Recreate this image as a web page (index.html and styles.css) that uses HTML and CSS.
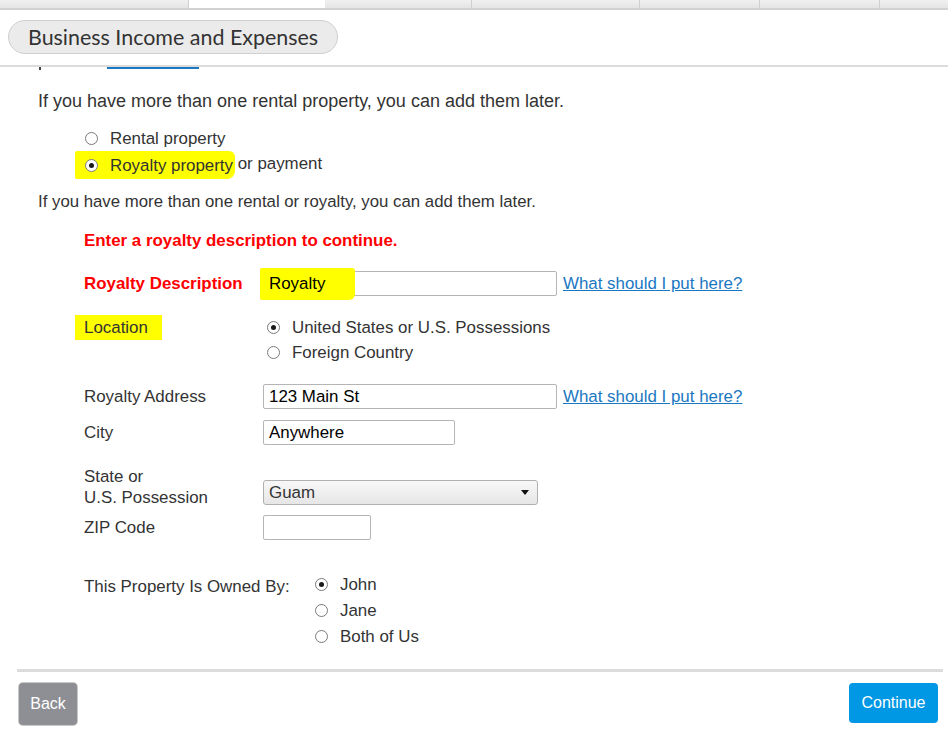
FILE: index.html
```html
<!DOCTYPE html>
<html>
<head>
<meta charset="utf-8">
<link rel="stylesheet" href="styles.css">
</head>
<body>
<div class="tabs">
  <div class="tab t1"></div>
  <div class="tab t2 active"></div>
  <div class="tab t3"></div>
  <div class="tab t4"></div>
  <div class="tab t5"></div>
  <div class="tab t6"></div>
  <div class="tab t7"></div>
</div>
<div class="header">
  <div class="pill">Business Income and Expenses</div>
</div>
<div class="content">
  <div class="clip"><span class="stem"></span><span class="uline"></span></div>
  <p class="p1">If you have more than one rental property, you can add them later.</p>
  <div class="choices">
    <label class="radio-row"><span class="radio"></span><span>Rental property</span></label>
    <label class="radio-row hl-row"><span class="hl"><span class="radio checked"></span><span>Royalty property</span></span><span>&nbsp;or payment</span></label>
  </div>
  <p class="p2">If you have more than one rental or royalty, you can add them later.</p>
  <div class="form">
    <div class="error">Enter a royalty description to continue.</div>
    <div class="row row-desc">
      <div class="lbl err-lbl">Royalty Description</div>
      <div class="field"><div class="input wide"><span class="hl-text">Royalty</span></div><a href="#" class="link">What should I put here?</a></div>
    </div>
    <div class="row row-loc">
      <div class="lbl"><span class="hl-loc">Location</span></div>
      <div class="field-col">
        <div class="radio-row"><span class="radio checked"></span><span>United States or U.S. Possessions</span></div>
        <div class="radio-row"><span class="radio"></span><span>Foreign Country</span></div>
      </div>
    </div>
    <div class="row row-addr">
      <div class="lbl">Royalty Address</div>
      <div class="field"><div class="input wide">123 Main St</div><a href="#" class="link">What should I put here?</a></div>
    </div>
    <div class="row row-city">
      <div class="lbl">City</div>
      <div class="field"><div class="input city">Anywhere</div></div>
    </div>
    <div class="row row-state">
      <div class="lbl">State or<br>U.S. Possession</div>
      <div class="field"><div class="select"><span>Guam</span><span class="caret"></span></div></div>
    </div>
    <div class="row row-zip">
      <div class="lbl">ZIP Code</div>
      <div class="field"><div class="input zip"></div></div>
    </div>
    <div class="row row-owner">
      <div class="lbl owner-lbl">This Property Is Owned By:</div>
      <div class="field-col">
        <div class="radio-row"><span class="radio checked"></span><span>John</span></div>
        <div class="radio-row"><span class="radio"></span><span>Jane</span></div>
        <div class="radio-row"><span class="radio"></span><span>Both of Us</span></div>
      </div>
    </div>
  </div>
</div>
<div class="footer">
  <button class="btn back">Back</button>
  <button class="btn continue">Continue</button>
</div>
</body>
</html>
```
FILE: styles.css
```css
html, body {
  margin: 0;
  padding: 0;
  background: #fff;
}
body {
  font-family: "Liberation Sans", Arial, sans-serif;
  font-size: 16.9px;
  color: #333;
  width: 948px;
  height: 733px;
  overflow: hidden;
}
.tabs {
  display: flex;
  height: 8px;
  border-bottom: 2px solid #d2d2d2;
}
.tab {
  background: linear-gradient(#f0f0f0, #e4e4e4);
  border-right: 1px solid #cfcfcf;
  box-sizing: border-box;
}
.tab.active { background: #fff; }
.t1 { width: 189px; }
.t2 { width: 136px; border-right: none; }
.t3 { width: 147px; }
.t4 { width: 168px; }
.t5 { width: 120px; }
.t6 { width: 120px; }
.t7 { flex: 1; border-right: none; }
.header {
  padding: 10px 8px 11px;
  border-bottom: 2px solid #dcdcdc;
}
.pill {
  display: inline-block;
  height: 32px;
  line-height: 32px;
  padding: 0 19px;
  border: 1px solid #cfcfcf;
  border-radius: 18px;
  background: #ebebeb;
  font-family: Lato, "Open Sans", sans-serif;
  font-size: 21.45px;
  color: #333;
}
.content {
  padding-left: 38px;
}
.clip {
  height: 4px;
  display: flex;
  align-items: flex-start;
}
.stem {
  width: 2px;
  height: 3px;
  background: #444;
  margin-left: 1px;
}
.uline {
  width: 92px;
  height: 2px;
  background: #1a78c2;
  margin-left: 66px;
}
.link {
  color: #1a78c2;
  text-decoration: underline;
}
p { margin: 0; }
.p1 {
  margin-top: 19px;
  font-size: 18px;
  line-height: 22px;
}
.choices {
  margin-top: 14px;
  padding-left: 47px;
}
.radio-row {
  display: flex;
  align-items: center;
  height: 25px;
  line-height: 25px;
}
.radio {
  width: 13px;
  height: 13px;
  border: 1px solid #7a7a7a;
  border-radius: 50%;
  box-sizing: border-box;
  background: #fff;
  margin-right: 12px;
  position: relative;
  flex: none;
}
.radio.checked::after {
  content: "";
  position: absolute;
  left: 3px;
  top: 3px;
  width: 5px;
  height: 5px;
  border-radius: 50%;
  background: #1a1a1a;
}
.hl {
  display: inline-flex;
  align-items: center;
  background: #ffff00;
  margin-left: -10px;
  padding-left: 10px;
  padding-right: 2px;
  margin-right: -2px;
  height: 28px;
  margin-top: 3px;
  border-radius: 2px 6px 8px 2px;
}
.p2 {
  margin-top: 16px;
  font-size: 16.8px;
  line-height: 20px;
}
.form {
  padding-left: 46px;
}
.error {
  margin-top: 19px;
  color: #f00;
  font-weight: bold;
  line-height: 20px;
}
.row {
  display: flex;
  align-items: flex-start;
}
.lbl {
  width: 179px;
  flex: none;
  line-height: 25px;
}
.err-lbl {
  color: #f00;
  font-weight: bold;
}
.field {
  display: flex;
  align-items: center;
  gap: 6px;
}
.field-col {
  display: flex;
  flex-direction: column;
  padding-left: 4px;
}
.input {
  height: 25px;
  box-sizing: border-box;
  border: 1px solid #b5b5b5;
  border-radius: 2px;
  padding: 0 5px;
  line-height: 23px;
  color: #000;
}
.input.wide { width: 294px; }
.input.city { width: 192px; }
.input.zip { width: 108px; }
.hl-text {
  display: inline-block;
  background: #ffff00;
  margin-left: -9px;
  padding: 0 30px 0 9px;
  line-height: 32px;
  margin-top: -4px;
  height: 32px;
  vertical-align: top;
  border-radius: 2px 3px 6px 2px;
}
.row-desc { margin-top: 20px; }
.row-loc { margin-top: 19px; }
.hl-loc {
  display: inline-block;
  background: #ffff00;
  margin-left: -9px;
  padding: 0 14px 0 9px;
  line-height: 25px;
}
.row-addr { margin-top: 19px; }
.row-city { margin-top: 11px; }
.row-state { margin-top: 21px; }
.row-state .lbl { line-height: 21px; }
.row-state .field { margin-top: 14px; }
.select {
  width: 275px;
  height: 25px;
  box-sizing: border-box;
  border: 1px solid #b0b0b0;
  border-radius: 3px;
  background: linear-gradient(#f8f8f8, #e6e6e6);
  display: flex;
  align-items: center;
  justify-content: space-between;
  padding: 0 8px 0 5px;
  color: #333;
}
.caret {
  width: 0;
  height: 0;
  border-left: 4px solid transparent;
  border-right: 4px solid transparent;
  border-top: 5px solid #111;
}
.row-zip { margin-top: 7px; }
.row-owner { margin-top: 31px; }
.owner-lbl { width: 228px; line-height: 27px; margin-top: 2px; }
.row-owner .field-col { padding-left: 3px; }
.row-owner .radio-row { height: 26px; }
.footer {
  margin: 20px 5px 0 17px;
  border-top: 3px solid #dcdcdc;
  padding-top: 11px;
  display: flex;
  justify-content: space-between;
  align-items: flex-start;
}
.btn {
  font-family: "Liberation Sans", Arial, sans-serif;
  font-size: 16px;
  color: #fff;
  border: none;
  border-radius: 4px;
  height: 40px;
  cursor: pointer;
}
.back {
  margin-left: 2px;
  width: 58px;
  height: 42px;
  background: #8e8f94;
  box-shadow: 0 0 0 1px #c9c9c9;
}
.continue {
  width: 89px;
  margin-right: 5px;
  background: #0097e4;
}
```
